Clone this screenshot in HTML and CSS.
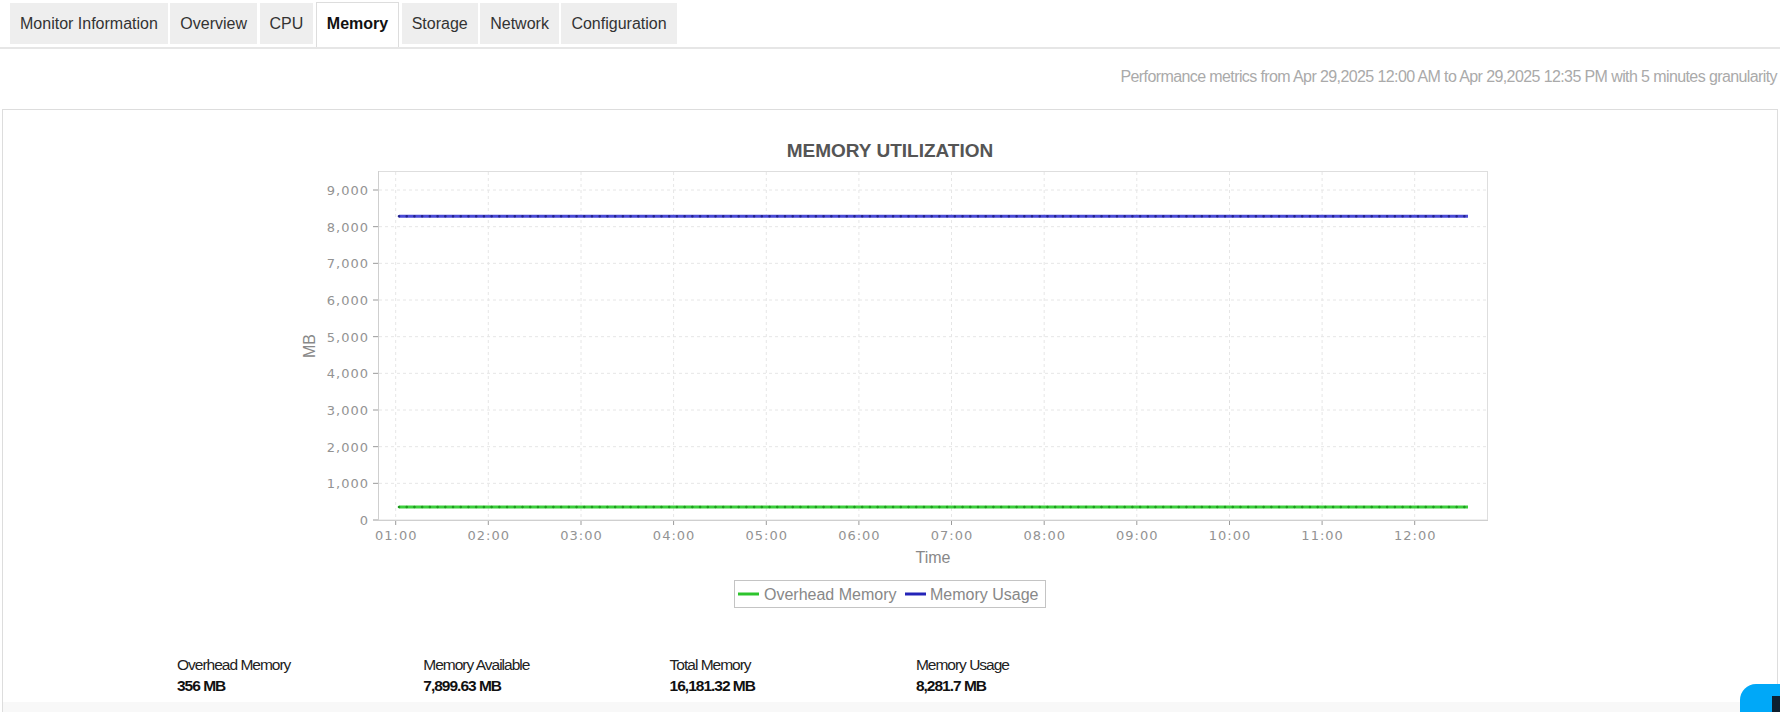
FILE: index.html
```html
<!DOCTYPE html>
<html>
<head>
<meta charset="utf-8">
<title>Memory</title>
<link rel="stylesheet" href="styles.css">
</head>
<body>
<nav class="tabbar">
  <div class="tab">Monitor Information</div>
  <div class="tab">Overview</div>
  <div class="tab">CPU</div>
  <div class="tab active">Memory</div>
  <div class="tab">Storage</div>
  <div class="tab">Network</div>
  <div class="tab">Configuration</div>
</nav>
<div class="meta">Performance metrics from Apr 29,2025 12:00 AM to Apr 29,2025 12:35 PM with 5 minutes granularity</div>
<section class="panel">
  <svg class="chart" width="1774" height="510" viewBox="3 110 1774 510" xmlns="http://www.w3.org/2000/svg">
    <text class="title" x="890" y="157" text-anchor="middle">MEMORY UTILIZATION</text>
    <rect x="378.5" y="171.5" width="1109" height="348.5" fill="#fff" stroke="#dedede"/>
    <g class="grid">
      <line x1="379" x2="1487" y1="483.33" y2="483.33"/>
      <line x1="379" x2="1487" y1="446.67" y2="446.67"/>
      <line x1="379" x2="1487" y1="410" y2="410"/>
      <line x1="379" x2="1487" y1="373.33" y2="373.33"/>
      <line x1="379" x2="1487" y1="336.67" y2="336.67"/>
      <line x1="379" x2="1487" y1="300" y2="300"/>
      <line x1="379" x2="1487" y1="263.33" y2="263.33"/>
      <line x1="379" x2="1487" y1="226.67" y2="226.67"/>
      <line x1="379" x2="1487" y1="190" y2="190"/>
      <line y1="172" y2="519" x1="395.7" x2="395.7"/>
      <line y1="172" y2="519" x1="488.3" x2="488.3"/>
      <line y1="172" y2="519" x1="581.0" x2="581.0"/>
      <line y1="172" y2="519" x1="673.6" x2="673.6"/>
      <line y1="172" y2="519" x1="766.3" x2="766.3"/>
      <line y1="172" y2="519" x1="858.9" x2="858.9"/>
      <line y1="172" y2="519" x1="951.5" x2="951.5"/>
      <line y1="172" y2="519" x1="1044.2" x2="1044.2"/>
      <line y1="172" y2="519" x1="1136.8" x2="1136.8"/>
      <line y1="172" y2="519" x1="1229.5" x2="1229.5"/>
      <line y1="172" y2="519" x1="1322.1" x2="1322.1"/>
      <line y1="172" y2="519" x1="1414.7" x2="1414.7"/>
    </g>
    <g class="axis">
      <line x1="378.5" x2="378.5" y1="171" y2="520.5"/>
      <line x1="378" x2="1488" y1="520.5" y2="520.5"/>
    </g>
    <g class="ticks">
      <line x1="373" x2="378" y1="520" y2="520"/>
      <line x1="373" x2="378" y1="483.33" y2="483.33"/>
      <line x1="373" x2="378" y1="446.67" y2="446.67"/>
      <line x1="373" x2="378" y1="410" y2="410"/>
      <line x1="373" x2="378" y1="373.33" y2="373.33"/>
      <line x1="373" x2="378" y1="336.67" y2="336.67"/>
      <line x1="373" x2="378" y1="300" y2="300"/>
      <line x1="373" x2="378" y1="263.33" y2="263.33"/>
      <line x1="373" x2="378" y1="226.67" y2="226.67"/>
      <line x1="373" x2="378" y1="190" y2="190"/>
      <line y1="521" y2="525" x1="395.7" x2="395.7"/>
      <line y1="521" y2="525" x1="488.3" x2="488.3"/>
      <line y1="521" y2="525" x1="581.0" x2="581.0"/>
      <line y1="521" y2="525" x1="673.6" x2="673.6"/>
      <line y1="521" y2="525" x1="766.3" x2="766.3"/>
      <line y1="521" y2="525" x1="858.9" x2="858.9"/>
      <line y1="521" y2="525" x1="951.5" x2="951.5"/>
      <line y1="521" y2="525" x1="1044.2" x2="1044.2"/>
      <line y1="521" y2="525" x1="1136.8" x2="1136.8"/>
      <line y1="521" y2="525" x1="1229.5" x2="1229.5"/>
      <line y1="521" y2="525" x1="1322.1" x2="1322.1"/>
      <line y1="521" y2="525" x1="1414.7" x2="1414.7"/>
    </g>
    <g class="ylabels" text-anchor="end">
      <text x="369" y="525">0</text>
      <text x="369" y="488.33">1,000</text>
      <text x="369" y="451.67">2,000</text>
      <text x="369" y="415">3,000</text>
      <text x="369" y="378.33">4,000</text>
      <text x="369" y="341.67">5,000</text>
      <text x="369" y="305">6,000</text>
      <text x="369" y="268.33">7,000</text>
      <text x="369" y="231.67">8,000</text>
      <text x="369" y="195">9,000</text>
    </g>
    <g class="xlabels" text-anchor="middle">
      <text x="396.2" y="540">01:00</text>
      <text x="488.8" y="540">02:00</text>
      <text x="581.5" y="540">03:00</text>
      <text x="674.1" y="540">04:00</text>
      <text x="766.8" y="540">05:00</text>
      <text x="859.4" y="540">06:00</text>
      <text x="952.0" y="540">07:00</text>
      <text x="1044.7" y="540">08:00</text>
      <text x="1137.3" y="540">09:00</text>
      <text x="1230.0" y="540">10:00</text>
      <text x="1322.6" y="540">11:00</text>
      <text x="1415.2" y="540">12:00</text>
    </g>
    <text class="axis-title" x="309" y="346" text-anchor="middle" dominant-baseline="central" transform="rotate(-90 309 346)">MB</text>
    <text class="axis-title" x="933" y="563" text-anchor="middle">Time</text>
    <g class="series">
      <line class="blue" x1="399" x2="1468" y1="216.3" y2="216.3"/>
      <line class="blue-dots" x1="399" x2="1468" y1="216.3" y2="216.3"/>
      <line class="green" x1="399" x2="1468" y1="507" y2="507"/>
      <line class="green-dots" x1="399" x2="1468" y1="507" y2="507"/>
    </g>
    <g class="legend">
      <rect x="734.5" y="580.5" width="311" height="27" fill="#fff" stroke="#c4c4c4"/>
      <line x1="738" x2="759" y1="594" y2="594" stroke="#2dc42d" stroke-width="3"/>
      <text x="764" y="599.5">Overhead Memory</text>
      <line x1="905" x2="926" y1="594" y2="594" stroke="#2424b8" stroke-width="3"/>
      <text x="930" y="599.5">Memory Usage</text>
    </g>
  </svg>
  <div class="stats">
    <div class="stat"><div class="label">Overhead Memory</div><div class="value">356 MB</div></div>
    <div class="stat"><div class="label">Memory Available</div><div class="value">7,899.63 MB</div></div>
    <div class="stat"><div class="label">Total Memory</div><div class="value">16,181.32 MB</div></div>
    <div class="stat"><div class="label">Memory Usage</div><div class="value">8,281.7 MB</div></div>
  </div>
  <div class="band"></div>
</section>
<div class="chat"><div class="chat-inner"></div></div>
</body>
</html>
```
FILE: styles.css
```css
html, body {
  margin: 0;
  padding: 0;
  background: #fff;
  overflow: hidden;
  font-family: "Liberation Sans", Arial, sans-serif;
}

.tabbar {
  display: flex;
  align-items: flex-start;
  gap: 2.5px;
  padding: 3px 0 3px 10px;
  border-bottom: 2px solid #e6e6e6;
}

.tab {
  padding: 10px 10px;
  line-height: 21px;
  font-size: 16px;
  color: #333;
  background: #eeeeee;
  white-space: nowrap;
}

.tab.active {
  background: #fff;
  color: #111;
  font-weight: bold;
  border: 1px solid #dddddd;
  border-bottom: 0;
  margin-top: -1px;
  margin-bottom: -3px;
  padding-bottom: 13px;
}

.meta {
  text-align: right;
  padding: 18px 3px 0 0;
  line-height: 20px;
  font-size: 16px;
  letter-spacing: -0.6px;
  color: #aaaaaa;
  margin-bottom: 22px;
  white-space: nowrap;
}

.panel {
  margin: 0 2px;
  border: 1px solid #dddddd;
  border-bottom: 0;
}

.chart {
  display: block;
}

.chart .title {
  font-family: "Liberation Sans", Arial, sans-serif;
  font-weight: bold;
  font-size: 19px;
  fill: #555555;
}

.chart .grid line {
  stroke: #e6e6e6;
  stroke-width: 1;
  stroke-dasharray: 3 3;
}

.chart .axis line {
  stroke: #cfcfcf;
  stroke-width: 1;
}

.chart .ticks line {
  stroke: #9a9a9a;
  stroke-width: 1;
}

.chart .ylabels text,
.chart .xlabels text {
  font-family: "DejaVu Sans", "Liberation Sans", sans-serif;
  font-size: 13px;
  letter-spacing: 1px;
  fill: #939393;
}

.chart .axis-title {
  font-family: "Liberation Sans", Arial, sans-serif;
  font-size: 16px;
  fill: #888888;
}

.chart .series .blue {
  stroke: #4a4ad6;
  stroke-width: 3;
}

.chart .series .blue-dots {
  stroke: #23238f;
  stroke-width: 2.6;
  stroke-linecap: round;
  stroke-dasharray: 0 7.72;
}

.chart .series .green {
  stroke: #3ccf3c;
  stroke-width: 3;
}

.chart .series .green-dots {
  stroke: #1e9a1e;
  stroke-width: 2.6;
  stroke-linecap: round;
  stroke-dasharray: 0 7.72;
}

.chart .legend text {
  font-family: "Liberation Sans", Arial, sans-serif;
  font-size: 16px;
  fill: #888888;
}

.stats {
  display: flex;
  padding: 34px 0 6px 174px;
}

.stat {
  width: 246.3px;
  flex: none;
}

.stat .label {
  font-size: 15.5px;
  line-height: 21px;
  letter-spacing: -1px;
  color: #222;
  white-space: nowrap;
}

.stat .value {
  font-size: 15.5px;
  line-height: 21px;
  letter-spacing: -1px;
  font-weight: bold;
  color: #111;
  white-space: nowrap;
}

.band {
  height: 10px;
  background: #f8f8f8;
}

.chat {
  position: fixed;
  right: 0;
  bottom: 0;
  width: 40px;
  height: 28px;
  background: #00a8f8;
  border-radius: 16px 0 0 0;
}

.chat-inner {
  position: absolute;
  left: 32px;
  top: 12px;
  width: 8px;
  height: 16px;
  background: #0d2030;
}
```
